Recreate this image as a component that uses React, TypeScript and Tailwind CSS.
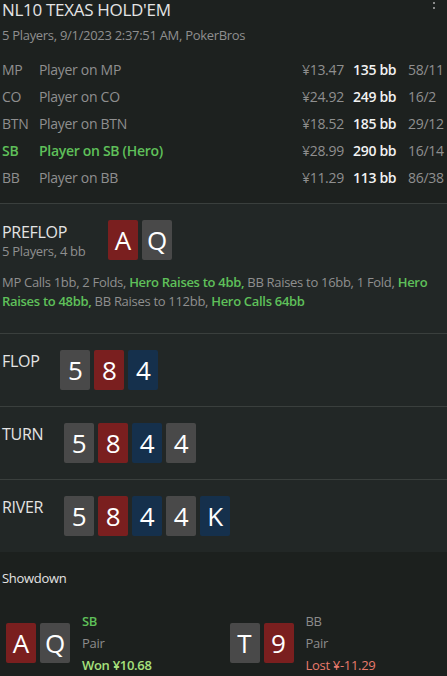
import { ReactNode } from 'react';

type Suit = 'r' | 'g' | 'b';

const suitBg: Record<Suit, string> = {
  r: 'bg-[#7a1f1f]',
  g: 'bg-[#494949]',
  b: 'bg-[#15304c]'
};

function Card({ rank, suit }: { rank: string; suit: Suit }) {
  return (
    <div
      className={`${suitBg[suit]} flex h-10 w-[30px] items-center justify-center rounded-[2px] text-[26px] leading-none tracking-normal text-white`}
    >
      {rank}
    </div>
  );
}

function Cards({ cards }: { cards: [string, Suit][] }) {
  return (
    <div className="flex gap-1">
      {cards.map(([r, s], i) => (
        <Card key={i} rank={r} suit={s} />
      ))}
    </div>
  );
}

const players = [
  { pos: 'MP', name: 'Player on MP', amt: '¥13.47', bb: '135 bb', stats: '58/11' },
  { pos: 'CO', name: 'Player on CO', amt: '¥24.92', bb: '249 bb', stats: '16/2' },
  { pos: 'BTN', name: 'Player on BTN', amt: '¥18.52', bb: '185 bb', stats: '29/12' },
  { pos: 'SB', name: 'Player on SB (Hero)', amt: '¥28.99', bb: '290 bb', stats: '16/14', hero: true },
  { pos: 'BB', name: 'Player on BB', amt: '¥11.29', bb: '113 bb', stats: '86/38' }
];

function Street({ label, children }: { label: string; children: ReactNode }) {
  return (
    <section className="flex items-start border-t border-[#3a3f3d] bg-[#222726] px-[2px] pt-4 pb-4">
      <div className="mr-[21px] pt-[1px] text-[16px] leading-5 text-[#e4e4e4]">{label}</div>
      {children}
    </section>
  );
}

function ShowdownHand({
  cards,
  pos,
  hand,
  result,
  won
}: {
  cards: [string, Suit][];
  pos: string;
  hand: string;
  result: string;
  won?: boolean;
}) {
  return (
    <div className="flex items-center pl-[6px]">
      <Cards cards={cards} />
      <div className="ml-3 flex flex-col text-[13px] leading-[22px]">
        <span className={won ? 'font-semibold text-[#5fc05a]' : 'text-[#8c8c8c]'}>{pos}</span>
        <span className="text-[#8c8c8c]">{hand}</span>
        <span className={won ? 'font-semibold text-[#a6e07c]' : 'text-[#e87a6c]'}>{result}</span>
      </div>
    </div>
  );
}

export default function App() {
  return (
    <div className="h-[676px] w-[447px] overflow-hidden bg-[#1d211f] font-['Open_Sans',sans-serif] tracking-[-0.3px] text-[#8f8f8f]">
      {/* header */}
      <header className="px-[2px] pt-[1px]">
        <div className="flex items-start justify-between">
          <h1 className="text-[17px] leading-[17px] text-[#e4e4e4]">NL10 TEXAS HOLD'EM</h1>
          <svg width="4" height="10" viewBox="0 0 4 10" className="mt-[1px] mr-[9px]" fill="#8a8a8a">
            <rect x="1" y="0" width="2" height="2" />
            <rect x="1" y="5" width="2" height="2" />
          </svg>
        </div>
        <p className="mt-[8px] text-[13px] leading-[18px]">5 Players, 9/1/2023 2:37:51 AM, PokerBros</p>

        <div className="mt-[12px] mb-[12px] flex flex-col text-[14px]">
          {players.map((p) => (
            <div key={p.pos} className="flex h-[27px] items-center">
              <span className={`w-[37px] ${p.hero ? 'font-semibold text-[#5fc05a]' : ''}`}>{p.pos}</span>
              <span className={`flex-1 ${p.hero ? 'font-semibold text-[#5fc05a]' : ''}`}>{p.name}</span>
              <span className="w-[51px]">{p.amt}</span>
              <span className="w-[55px] font-semibold text-[#f2f2f2]">{p.bb}</span>
              <span className="w-[37px]">{p.stats}</span>
            </div>
          ))}
        </div>
      </header>

      {/* preflop */}
      <section className="border-t border-[#3a3f3d] bg-[#222726] px-[2px] pt-4 pb-[22px]">
        <div className="flex items-start">
          <div className="mr-5 w-[86px] pt-[2px]">
            <div className="text-[16px] leading-5 text-[#e4e4e4]">PREFLOP</div>
            <div className="text-[13px] leading-[18px]">5 Players, 4 bb</div>
          </div>
          <Cards cards={[['A', 'r'], ['Q', 'g']]} />
        </div>
        <p className="mt-[13px] text-[13px] leading-[19px]">
          MP Calls 1bb, 2 Folds, <b className="font-semibold text-[#5fc05a]">Hero Raises to 4bb,</b> BB Raises to
          16bb, 1 Fold, <b className="font-semibold text-[#5fc05a]">Hero Raises to 48bb,</b> BB Raises to 112bb,{' '}
          <b className="font-semibold text-[#5fc05a]">Hero Calls 64bb</b>
        </p>
      </section>

      <Street label="FLOP">
        <Cards cards={[['5', 'g'], ['8', 'r'], ['4', 'b']]} />
      </Street>
      <Street label="TURN">
        <Cards cards={[['5', 'g'], ['8', 'r'], ['4', 'b'], ['4', 'g']]} />
      </Street>
      <Street label="RIVER">
        <Cards cards={[['5', 'g'], ['8', 'r'], ['4', 'b'], ['4', 'g'], ['K', 'b']]} />
      </Street>

      {/* showdown */}
      <section className="bg-[#1c201e] pt-[17px]">
        <h2 className="px-[2px] text-[13px] leading-[18px] text-[#e4e4e4]">Showdown</h2>
        <div className="mt-[23px] grid grid-cols-2">
          <ShowdownHand cards={[['A', 'r'], ['Q', 'g']]} pos="SB" hand="Pair" result="Won ¥10.68" won />
          <ShowdownHand cards={[['T', 'g'], ['9', 'r']]} pos="BB" hand="Pair" result="Lost ¥-11.29" />
        </div>
      </section>
    </div>
  );
}
